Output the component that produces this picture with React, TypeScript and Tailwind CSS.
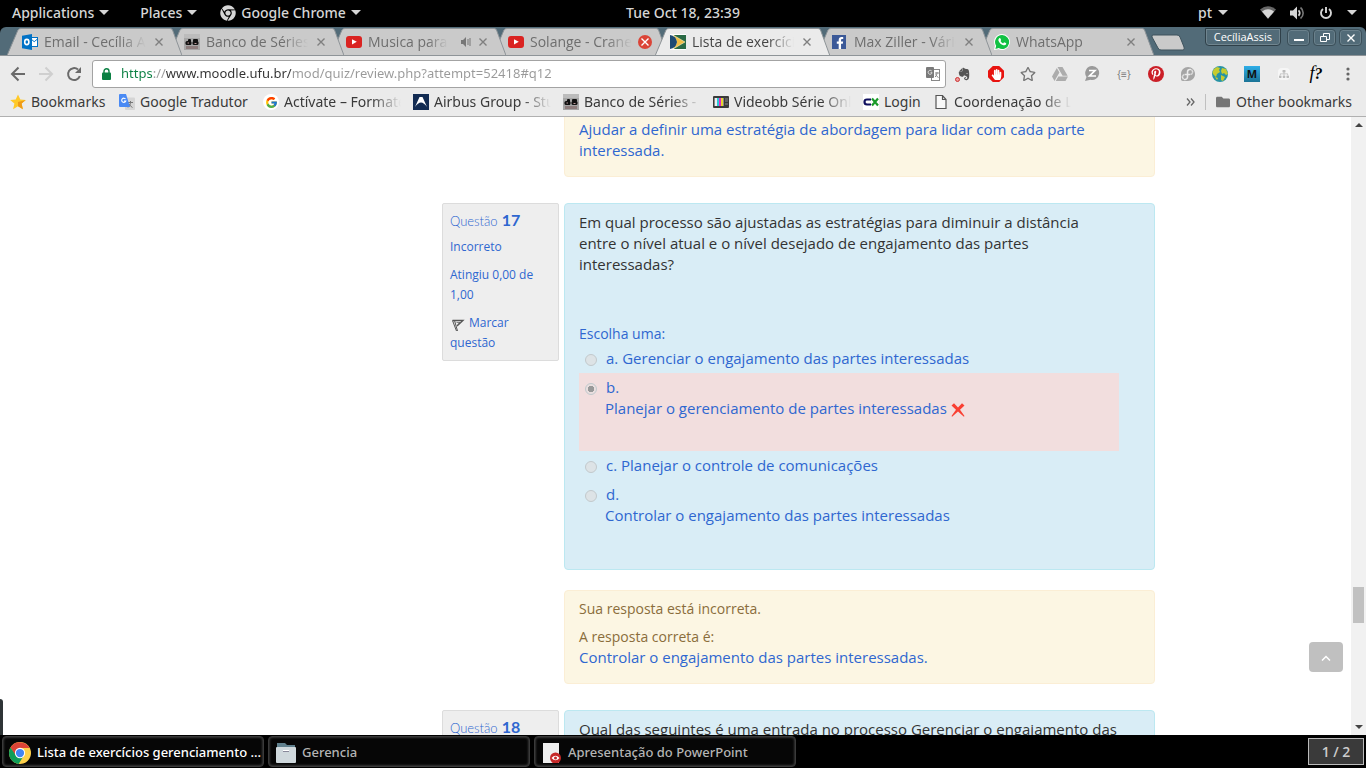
import type { ReactNode } from "react";
import {
  FaChrome,
  FaEvernote,
  FaFacebookF,
  FaFedora,
  FaFolder,
  FaGoogleDrive,
  FaHandPaper,
  FaPinterestP,
  FaRegStar,
  FaSitemap,
} from "react-icons/fa";
import { FcGoogle } from "react-icons/fc";

function Caret() {
  return (
    <svg viewBox="0 0 10 5" className="h-[5px] w-[10px]" fill="currentColor">
      <path d="M0 0h10L5 5z" />
    </svg>
  );
}

function TopBar() {
  return (
    <header className="grid h-[27px] shrink-0 grid-cols-[1fr_auto_1fr] items-center bg-black px-3 pb-[2px] font-['Noto_Sans',sans-serif] text-sm font-medium text-[#d6d6d6]">
      <nav className="flex items-center gap-[31px]">
        <button className="flex items-center gap-[5px]">
          Applications <Caret />
        </button>
        <button className="flex items-center gap-[5px]">
          Places <Caret />
        </button>
        <button className="-ml-2 flex items-center gap-[5px]">
          <FaChrome className="size-4" /> Google Chrome <Caret />
        </button>
      </nav>
      <time>Tue Oct 18, 23:39</time>
      <div className="flex items-center justify-end">
        <button className="mr-8 flex items-center gap-[6px]">
          pt <Caret />
        </button>
        <button aria-label="System" className="-mr-[3px] flex items-center gap-[14px]">
          <svg viewBox="0 0 16 13" className="h-[13px] w-4">
            <path d="M0 3.5Q8-3 16 3.5L8 13z" fill="#666" />
            <path d="M2 5.4Q8 1 14 5.4L8 12.6z" fill="#d6d6d6" />
          </svg>
          <svg viewBox="0 0 15 14" className="h-[14px] w-[15px]">
            <path d="M0 4.5h3L7 .5v13L3 9.5H0z" fill="#d6d6d6" />
            <path d="M8.5 4.3a3.6 3.6 0 0 1 0 5.4" fill="none" stroke="#d6d6d6" strokeWidth="1.8" />
            <path d="M10.5 1.5a7 7 0 0 1 0 11" fill="none" stroke="#777" strokeWidth="1.6" />
          </svg>
          <svg viewBox="0 0 14 14" className="size-[14px]" fill="none" stroke="#d6d6d6" strokeWidth="1.9">
            <path d="M4 3a5 5 0 1 0 6 0M7 1v6" />
          </svg>
          <Caret />
        </button>
      </div>
    </header>
  );
}

function YouTubeIcon() {
  return (
    <svg viewBox="0 0 16 16" className="size-4">
      <rect y="2" width="16" height="12" rx="3" fill="#da2321" />
      <path d="M6 5.2v5.2L10.8 7.8z" fill="#fff" />
    </svg>
  );
}

function SeriesIcon() {
  return (
    <svg viewBox="0 0 16 16" className="size-4">
      <rect width="16" height="16" fill="#a6a6a6" />
      <rect width="16" height="4" fill="#bcbcbc" />
      <g fill="#111">
        <rect x="1.500" y="7" width="6" height="4" rx="1.500" />
        <rect x="4" y="5" width="3" height="6" rx="1" />
        <rect x="9" y="5" width="5" height="3" rx="1" />
        <rect x="8.500" y="7" width="6" height="4" rx="1.500" />
      </g>
      <path d="M3.500 9h1.500M10.500 9.500h2" stroke="#b99" />
      <rect x="2" y="12" width="12" height="3" fill="#8d7c7c" />
    </svg>
  );
}

function OutlookIcon() {
  return (
    <svg viewBox="0 0 16 16" className="size-4">
      <rect x="8" y="3.500" width="7.500" height="9" fill="#fff" stroke="#0072c6" />
      <path d="M9 5l3.200 2.700L15.500 5" fill="none" stroke="#0072c6" />
      <path d="M0 1.800L10 0v16L0 14.200z" fill="#0072c6" />
      <ellipse cx="4.800" cy="8" rx="2.100" ry="2.600" fill="none" stroke="#fff" strokeWidth="1.600" />
    </svg>
  );
}

function MoodleSiteIcon() {
  return (
    <svg viewBox="0 0 16 16" className="size-4">
      <rect width="16" height="16" fill="#fff" />
      <path d="M4 1h12v14H4z" fill="#2a6a45" />
      <path d="M3 1l12 7-12 7q7-7 0-14z" fill="#f0be45" stroke="#fff3c4" strokeWidth=".6" />
      <path d="M0 1q6 1 7 7-1 6-7 7z" fill="#1d4a73" />
    </svg>
  );
}

function FacebookIcon() {
  return (
    <span className="flex size-[14px] items-end justify-end bg-[#3b5998]">
      <FaFacebookF className="size-3 text-white" />
    </span>
  );
}

function WhatsAppIcon() {
  return (
    <svg viewBox="0 0 16 16" className="size-4">
      <path d="M8 0a8 8 0 1 1-3.500 15.200L0 16l.9-4.400A8 8 0 0 1 8 0z" fill="#fff" />
      <path d="M8 1a7 7 0 1 1-3.300 13.100L1.400 15l.8-3.200A7 7 0 0 1 8 1z" fill="#12c143" />
      <path
        d="M5.200 4.200q.9-.6 1.400.5l.5 1.200q.1.400-.6 1.100.9 1.700 2.600 2.400l.8-.9q.3-.3.700-.1l1.300.7q.6.300.2 1.200-.9 1.400-2.700.9Q5.500 10 4.400 6.500q-.2-1.500.8-2.300z"
        fill="#fff"
      />
    </svg>
  );
}

function Cross({ className }: { className: string }) {
  return (
    <svg viewBox="0 0 8 8" className={className} fill="none" stroke="currentColor" strokeWidth="1.4">
      <path d="M.5.5l7 7M7.500.5l-7 7" />
    </svg>
  );
}

type TabData = { title: string; icon: ReactNode; active?: boolean; audio?: boolean; alert?: boolean };

const tabs: TabData[] = [
  { title: "Email - Cecília Assis", icon: <OutlookIcon /> },
  { title: "Banco de Séries", icon: <SeriesIcon /> },
  { title: "Musica para estudar", icon: <YouTubeIcon />, audio: true },
  { title: "Solange - Cranes", icon: <YouTubeIcon />, alert: true },
  { title: "Lista de exercícios", icon: <MoodleSiteIcon />, active: true },
  { title: "Max Ziller - Vários", icon: <FacebookIcon /> },
  { title: "WhatsApp", icon: <WhatsAppIcon /> },
];

const tabLayers = ["z-[7]", "z-[6]", "z-[5]", "z-[4]", "z-[9]", "z-[3]", "z-[2]"];

function Tab({ tab, layer }: { tab: TabData; layer: string }) {
  return (
    <div className={`relative flex h-7 w-[162px] shrink-0 items-center pl-[15px] ${layer}`}>
      <svg viewBox="0 0 175 28" className="absolute top-0 left-0 -z-10 h-7 w-[175px]">
        <path d="M0 28L11 2Q12 .5 14 .5H163Q165 .5 165.500 2L175 28z" fill={tab.active ? "#ebebeb" : "#cacaca"} />
        <path
          d={tab.active ? "M0 28L11 2Q12 .5 14 .5H163Q165 .5 165.500 2L175 28" : "M0 27.500L11 2Q12 .5 14 .5H163Q165 .5 165.500 2L175 27.500z"}
          fill="none"
          stroke="#8e9498"
        />
      </svg>
      <span className="flex w-[22px] shrink-0">{tab.icon}</span>
      <span
        className={`overflow-hidden pb-[1px] text-sm whitespace-nowrap mask-r-from-75% ${tab.audio ? "w-[80px]" : "w-[102px]"} ${tab.active ? "text-[#454545]" : "text-[#6e6e6e]"}`}
      >
        {tab.title}
      </span>
      {tab.audio && (
        <svg viewBox="0 0 10 10" className="ml-[13px] h-[10px] w-[10px]" fill="#777">
          <path d="M0 3h2l3-3v10L2 7H0z" />
          <path d="M7 2v6M9 1v8" stroke="#777" />
        </svg>
      )}
      {tab.alert ? (
        <button aria-label="Close tab" className="mr-[3px] ml-auto flex size-[14px] shrink-0 items-center justify-center rounded-full bg-[#db4437] text-white">
          <Cross className="size-2" />
        </button>
      ) : (
        <button aria-label="Close tab" className="mr-[6px] ml-auto text-[#7f7f7f]">
          <Cross className="size-2" />
        </button>
      )}
    </div>
  );
}

function TabStrip() {
  return (
    <div className="bg-black">
      <div className="relative z-0 flex h-[29px] items-start overflow-hidden rounded-t-md border-b border-[#8e9498] bg-[#526b78] pt-[1px] pl-[7px]">
        {tabs.map((tab, i) => (
          <Tab key={tab.title} tab={tab} layer={tabLayers[i]} />
        ))}
        <button aria-label="New tab" className="mt-[6px] ml-[10px]">
          <svg viewBox="0 0 34 17" className="h-[17px] w-[34px]">
            <path d="M2 1h24q2 0 3 2l4 10q1 3-1 3H10q-2 0-3-2L1 3q-.5-2 1-2z" fill="#cacaca" stroke="#3e525c" />
          </svg>
        </button>
        <div className="ml-auto flex items-start gap-[3px] pr-1">
          <button className="mr-[3px] h-[18px] rounded-b border border-[#2f4049] px-2 text-[11px] leading-4 text-white shadow-[inset_0_0_0_1px_#70858f]">
            CecíliaAssis
          </button>
          {["Minimize", "Restore", "Close"].map((name) => (
            <button
              key={name}
              aria-label={name}
              className="mt-[1px] flex h-[17px] w-[23px] items-center justify-center rounded-sm border border-[#3b4f59] text-white shadow-[inset_0_0_0_1px_#6b818c]"
            >
              {name === "Minimize" && <span className="mt-1 h-[2px] w-[10px] bg-white" />}
              {name === "Restore" && (
                <svg viewBox="0 0 10 10" className="size-[10px]" fill="none" stroke="currentColor">
                  <path d="M3.500 3V.5h6v6H7M.5 3.500h6v5h-6z" />
                </svg>
              )}
              {name === "Close" && <Cross className="size-2" />}
            </button>
          ))}
        </div>
      </div>
    </div>
  );
}

const extensions: { name: string; icon: ReactNode }[] = [
  {
    name: "Web Clipper",
    icon: (
      <span className="relative">
        <FaEvernote className="size-[14px] text-[#555]" />
        <span className="absolute -bottom-[1px] -left-[2px] size-[5px] rounded-full border border-[#c33] bg-[#e99]" />
      </span>
    ),
  },
  {
    name: "Ad blocker",
    icon: (
      <span className="flex size-4 items-center justify-center bg-[#e8130f] [clip-path:polygon(30%_0,70%_0,100%_30%,100%_70%,70%_100%,30%_100%,0_70%,0_30%)]">
        <FaHandPaper className="size-[11px] text-white" />
      </span>
    ),
  },
  { name: "Bookmark this page", icon: <FaRegStar className="size-4 text-[#757575]" /> },
  { name: "Drive", icon: <FaGoogleDrive className="size-4 text-[#acacac]" /> },
  {
    name: "Zotero",
    icon: (
      <svg viewBox="0 0 16 16" className="size-4">
        <path d="M8.500 0a7 7 0 1 1-2 13.800L1 15l1.500-4A7 7 0 0 1 8.500 0z" fill="#9a9a9a" />
        <path d="M5 4.500h6l-5.500 5.500H12" fill="none" stroke="#fff" strokeWidth="1.700" />
      </svg>
    ),
  },
  { name: "Code", icon: <span className="text-[10px] leading-none text-[#777]">{"{≡}"}</span> },
  {
    name: "Pinterest",
    icon: (
      <span className="flex size-4 items-center justify-center rounded-full bg-[#cb1f27]">
        <FaPinterestP className="size-3 text-white" />
      </span>
    ),
  },
  { name: "Fedora", icon: <FaFedora className="size-4 text-[#a5a5a5]" /> },
  {
    name: "Globe",
    icon: (
      <svg viewBox="0 0 16 16" className="size-4">
        <circle cx="8" cy="8" r="8" fill="#2793a5" />
        <path d="M2 3l3-2 3 1-1 2 1 2-3 2-1 3-3-3-.5-2zM10 2l4 1 2 5-2 1-2-2-2 1-1-3zM9 9l4 2-2 4-2-1zM3 11l3 1-1 2z" fill="#c6cb2e" />
      </svg>
    ),
  },
  {
    name: "M",
    icon: <span className="flex size-4 items-center justify-center bg-linear-to-b from-[#2eaee8] to-[#1b7396] text-[11px] font-bold text-[#111]">M</span>,
  },
  {
    name: "Sitemap",
    icon: (
      <span className="flex size-3 items-center justify-center rounded-sm bg-[#f6f6f6]">
        <FaSitemap className="size-[10px] text-[#bbb]" />
      </span>
    ),
  },
  {
    name: "Font finder",
    icon: (
      <span className="font-['Liberation_Serif',serif] text-lg leading-none text-black">
        <i>f</i>
        <b className="text-base italic">?</b>
      </span>
    ),
  },
  {
    name: "Menu",
    icon: (
      <svg viewBox="0 0 4 14" className="h-[14px] w-1" fill="#666">
        <circle cx="2" cy="2" r="1.600" />
        <circle cx="2" cy="7" r="1.600" />
        <circle cx="2" cy="12" r="1.600" />
      </svg>
    ),
  },
];

function Toolbar() {
  return (
    <div className="flex h-[33px] items-center bg-[#ebebeb] pt-[3px] pr-[2px] pl-[10px]">
      <div className="flex w-[82px] items-center gap-3">
        <button aria-label="Back">
          <svg viewBox="0 0 16 16" className="size-4" fill="none" stroke="#6a6a6a" strokeWidth="2">
            <path d="M15 8H2.500M8.500 1.500L2 8l6.500 6.500" />
          </svg>
        </button>
        <button aria-label="Forward">
          <svg viewBox="0 0 16 16" className="size-4" fill="none" stroke="#cfcfcf" strokeWidth="2">
            <path d="M1 8h12.500M7.500 1.500L14 8l-6.500 6.500" />
          </svg>
        </button>
        <button aria-label="Reload">
          <svg viewBox="0 0 16 16" className="size-4" fill="none" stroke="#6a6a6a" strokeWidth="2">
            <path d="M13.800 10A6 6 0 1 1 12 3.500" />
            <path d="M15 1v6H9z" fill="#6a6a6a" stroke="none" />
          </svg>
        </button>
      </div>
      <div className="flex h-7 flex-1 items-center rounded-[3px] border border-[#a3a3a3] bg-white px-[9px]">
        <svg viewBox="0 0 9 12" className="mr-[10px] h-3 w-[9px]">
          <path d="M2 6V3.300a2.500 2.500 0 0 1 5 0V6" fill="none" stroke="#0b8043" strokeWidth="1.400" />
          <rect y="4.500" width="9" height="7.500" rx="1" fill="#0b8043" />
        </svg>
        <input
          aria-label="Address"
          defaultValue="https://www.moodle.ufu.br/mod/quiz/review.php?attempt=52418#q12"
          className="flex-1 bg-[linear-gradient(90deg,#0b8043_31px,#999_31px,#999_45px,#333_45px,#333_171px,#999_171px)] bg-clip-text font-['Noto_Sans',sans-serif] text-[13px] text-transparent caret-black outline-none"
        />
        <button aria-label="Translate this page" className="-mr-1">
          <svg viewBox="0 0 14 14" className="size-[14px]">
            <rect x="5.500" y="2.500" width="8" height="11" fill="#fff" stroke="#888" />
            <rect width="8" height="11" rx="1" fill="#7a7a7a" />
            <path d="M5.800 4.200a2 2 0 1 0 .3 1.500H4.500" fill="none" stroke="#ddd" />
            <path d="M9 6h4M11 5v1q0 3-2 4M9.500 7.500q1 2 3 3" fill="none" stroke="#888" />
          </svg>
        </button>
      </div>
      <div className="ml-[2px] flex">
        {extensions.map((item) => (
          <button key={item.name} aria-label={item.name} className="flex h-7 w-8 items-center justify-center">
            {item.icon}
          </button>
        ))}
      </div>
    </div>
  );
}

const bookmarks: { title: string; width: string; fade?: boolean; icon: ReactNode }[] = [
  {
    title: "Bookmarks",
    width: "w-[109px]",
    icon: (
      <svg viewBox="0 0 16 16" className="size-4">
        <path d="M8 .5l2.300 5 5.500.5-4.200 3.600 1.300 5.600L8 12.300l-4.900 2.900 1.300-5.600L.2 6l5.500-.5z" fill="#ffc928" />
        <path d="M8 12.300V8l3.600 1.600 1.300 5.600zM8 8l7.800-2-4.200 3.600z" fill="#ef9b18" />
      </svg>
    ),
  },
  {
    title: "Google Tradutor",
    width: "w-[144px]",
    icon: (
      <svg viewBox="0 0 16 16" className="size-4">
        <rect x="6" y="3.500" width="10" height="12.500" rx="1" fill="#d5d5d5" />
        <path d="M9 8.500h5M11.500 7v1.500q0 3-2.500 5M10 10q1 2 3.500 3.500" fill="none" stroke="#777" />
        <path d="M1 0h6l4 13H1q-1 0-1-1V1q0-1 1-1z" fill="#4a8af4" />
        <path d="M6.500 5a2.100 2.100 0 1 0 .3 2H5" fill="none" stroke="#fff" strokeWidth="1.100" />
      </svg>
    ),
  },
  {
    title: "Actívate – Formate",
    width: "w-[150px]",
    fade: true,
    icon: (
      <span className="flex size-4 items-center justify-center rounded-full bg-white">
        <FcGoogle className="size-[13px]" />
      </span>
    ),
  },
  {
    title: "Airbus Group - Students",
    width: "w-[150px]",
    fade: true,
    icon: (
      <svg viewBox="0 0 16 16" className="size-4">
        <rect width="16" height="16" fill="#122b52" />
        <path d="M2 13L6.500 3h3L14 13q-3-4.500-6-4.500T2 13z" fill="#fff" />
      </svg>
    ),
  },
  { title: "Banco de Séries - Org", width: "w-[150px]", fade: true, icon: <SeriesIcon /> },
  {
    title: "Videobb Série Online",
    width: "w-[150px]",
    fade: true,
    icon: (
      <svg viewBox="0 0 16 16" className="size-4">
        <rect y="2" width="16" height="12" rx="1" fill="#3a3a3a" />
        <path d="M12 5h3M12 7h3M12 10h3" stroke="#888" />
        <rect x="1" y="4" width="10" height="8" fill="#888" />
        <rect x="2" y="4" width="2" height="8" fill="#eee" />
        <rect x="4" y="4" width="2" height="8" fill="#2cc8d8" />
        <rect x="6" y="4" width="2" height="8" fill="#e02cc8" />
        <rect x="8" y="4" width="2" height="8" fill="#e8d52c" />
      </svg>
    ),
  },
  {
    title: "Login",
    width: "w-[70px]",
    icon: (
      <svg viewBox="0 0 16 16" className="size-4" fill="none" strokeWidth="2.200">
        <rect width="16" height="16" fill="#fff" />
        <path d="M8 5.500H4Q1.500 5.500 1.500 8T4 10.500h4" stroke="#10105e" />
        <path d="M9 4.500l6 7M15 4.500l-6 7" stroke="#1a9a2a" />
      </svg>
    ),
  },
  {
    title: "Coordenação de Letras",
    width: "w-[150px]",
    fade: true,
    icon: (
      <svg viewBox="0 0 16 16" className="size-4" fill="#f8f8f8" stroke="#555" strokeWidth="1.200">
        <path d="M3 1.500h6.500l3.500 4v9H3zM9.500 1.500v4H13" />
      </svg>
    ),
  },
];

function BookmarksBar() {
  return (
    <div className="flex h-7 items-center border-b border-[#b0b0b0] bg-[#ebebeb] pr-[14px] pb-[1px] pl-[10px] font-['Noto_Sans',sans-serif] text-sm text-[#3a3a3a]">
      {bookmarks.map((b) => (
        <a key={b.title} href="#" className={`flex shrink-0 items-center gap-[5px] pr-3 ${b.width}`}>
          <span className="shrink-0">{b.icon}</span>
          <span className={b.fade ? "overflow-hidden whitespace-nowrap mask-r-from-75%" : "whitespace-nowrap"}>{b.title}</span>
        </a>
      ))}
      <button aria-label="More bookmarks" className="ml-auto">
        <svg viewBox="0 0 9 8" className="h-2 w-[9px]" fill="none" stroke="#666" strokeWidth="1.300">
          <path d="M1 .5L4 4 1 7.500M5 .5L8 4 5 7.500" />
        </svg>
      </button>
      <span className="mx-[10px] h-4 w-px bg-[#c0c0c0]" />
      <a href="#" className="flex items-center gap-[6px]">
        <FaFolder className="size-[14px] text-[#757575]" /> Other bookmarks
      </a>
    </div>
  );
}

function InfoBox({ number, children }: { number: number; children?: ReactNode }) {
  return (
    <aside className="w-[117px] shrink-0 self-start rounded-xs border border-[#dcdcdc] bg-[#eee] p-[7px] text-xs leading-5">
      <h3 className="flex h-5 items-baseline gap-1 font-['Lato',sans-serif] text-[13px] leading-[18px] font-light">
        Questão <span className="text-base leading-[18px] font-bold">{number}</span>
      </h3>
      {children}
    </aside>
  );
}

function Feedback({ children }: { children: ReactNode }) {
  return (
    <div className="rounded border border-[#fbeed5] bg-[#fcf6e3] pt-2 pr-[35px] pb-[15px] pl-[14px] text-sm leading-5 text-[#8a6d3b]">
      {children}
    </div>
  );
}

const questionBox = "rounded border border-[#bce8f1] bg-[#d9edf6] pt-2 pr-[35px] pl-[14px] text-[15px] leading-[21px]";

const answers = [
  { key: "a", text: "Gerenciar o engajamento das partes interessadas" },
  { key: "b", text: "Planejar o gerenciamento de partes interessadas", block: true, chosen: true },
  { key: "c", text: "Planejar o controle de comunicações" },
  { key: "d", text: "Controlar o engajamento das partes interessadas", block: true },
];

function Answers() {
  return (
    <fieldset className="mt-[49px]">
      <legend className="text-sm leading-5">Escolha uma:</legend>
      {answers.map((a) => (
        <div key={a.key} className={`flex items-start pt-1 pl-[6px] ${a.block ? "pb-8" : "pb-1"} ${a.chosen ? "bg-[#f2dede]" : ""}`}>
          <input
            type="radio"
            name="answer"
            id={`answer-${a.key}`}
            defaultChecked={a.chosen}
            disabled
            className="mt-[6px] mr-2 size-3 shrink-0 appearance-none rounded-full border border-[#c2c9cc] bg-[#dde3e6] checked:bg-[radial-gradient(circle,#999_3px,#eadfdf_3px)]"
          />
          <label htmlFor={`answer-${a.key}`}>
            <span className="pl-[1px]">{a.key}. </span>
            {a.block ? (
              <span className="block">
                {a.text}
                {a.chosen && <WrongMark />}
              </span>
            ) : (
              a.text
            )}
          </label>
        </div>
      ))}
    </fieldset>
  );
}

function WrongMark() {
  return (
    <svg viewBox="0 0 14 14" className="ml-1 inline size-[14px]" role="img" aria-label="Incorreto">
      <path d="M.5 2.500L3 .3l4 4.200L11 .3l2.500 2.200L9 6.800 13.500 13l-.6.800L7 8.600l-5.900 5.200-.6-.8L5 6.800z" fill="#f93f32" />
    </svg>
  );
}

function Page() {
  return (
    <div className="relative flex min-h-0 flex-1 bg-white text-[#2f67d0]">
      <main className="flex flex-1 flex-col gap-[26px] overflow-hidden pr-[196px] pl-[442px]">
        <div className="-mt-[29px] pl-[122px]">
          <Feedback>
            <p>A resposta correta é:</p>
            <p className="mt-[2px] text-[15px] leading-[21px] text-[#2f67d0]">
              Ajudar a definir uma estratégia de abordagem para lidar com cada parte interessada.
            </p>
          </Feedback>
        </div>
        <section className="flex gap-[5px]">
          <InfoBox number={17}>
            <p className="mt-[6px]">Incorreto</p>
            <p className="mt-2">Atingiu 0,00 de 1,00</p>
            <p className="mt-2">
              <a href="#">
                <svg viewBox="0 0 16 16" className="mr-[3px] inline size-4" fill="none" stroke="#555">
                  <path d="M2.500 4.500L6.500 15M4.500 4.500L7.500 15" />
                  <path d="M2.500 4.500H13L7 10" strokeWidth="1.300" />
                  <path d="M6.500 6.500H10L7.500 8.500" strokeWidth=".7" />
                </svg>
                Marcar questão
              </a>
            </p>
          </InfoBox>
          <div className="flex min-w-0 flex-1 flex-col gap-5">
            <div className={`${questionBox} pb-[11px]`}>
              <p className="text-[#333]">
                Em qual processo são ajustadas as estratégias para diminuir a distância entre o nível atual e o nível desejado de
                engajamento das partes interessadas?
              </p>
              <Answers />
            </div>
            <Feedback>
              <p className="mb-2">Sua resposta está incorreta.</p>
              <p>A resposta correta é:</p>
              <p className="text-[15px] leading-[21px] text-[#2f67d0]">Controlar o engajamento das partes interessadas.</p>
            </Feedback>
          </div>
        </section>
        <section className="flex gap-[5px]">
          <InfoBox number={18} />
          <div className={`${questionBox} min-w-0 flex-1 pb-2`}>
            <p className="text-[#333]">Qual das seguintes é uma entrada no processo Gerenciar o engajamento das</p>
          </div>
        </section>
      </main>
      <button aria-label="Back to top" className="absolute right-[23px] bottom-[63px] flex h-[30px] w-[34px] items-center justify-center rounded bg-[#c0c0c0]">
        <svg viewBox="0 0 10 6" className="mt-[2px] h-[6px] w-[10px]" fill="none" stroke="#fff" strokeWidth="1.500">
          <path d="M1 5.500l4-4 4 4" />
        </svg>
      </button>
      <div className="flex w-[15px] shrink-0 flex-col items-center bg-[#f1f1f1] py-[6px] text-[#444]">
        <svg viewBox="0 0 8 4" className="h-1 w-2 fill-current">
          <path d="M0 4h8L4 0z" />
        </svg>
        <span className="mt-auto mb-[102px] h-9 w-[11px] bg-[#c1c1c1]" />
        <svg viewBox="0 0 8 4" className="h-1 w-2 fill-current">
          <path d="M0 0h8L4 4z" />
        </svg>
      </div>
      <span className="absolute bottom-0 left-0 h-9 w-[3px] rounded-tr bg-[#2e3436]" />
    </div>
  );
}

const windows = [
  {
    title: "Lista de exercícios gerenciamento ...",
    active: true,
    icon: (
      <svg viewBox="0 0 24 24" className="size-[22px] shrink-0">
        <circle cx="12" cy="12" r="12" fill="#fdd04a" />
        <path d="M1.600 6A12 12 0 0 1 22.400 6.500H12L7 15z" fill="#db4437" />
        <path d="M1.600 6A12 12 0 0 0 10.500 23.900L16 15 7 14z" fill="#0f9d58" />
        <circle cx="12" cy="12" r="5.600" fill="#fff" />
        <circle cx="12" cy="12" r="4.500" fill="#4285f4" />
      </svg>
    ),
  },
  {
    title: "Gerencia",
    icon: (
      <svg viewBox="0 0 20 20" className="ml-[1px] size-5 shrink-0">
        <path d="M1 0h8l2 2h8v6H1z" fill="#5f7f8c" />
        <rect y="4" width="20" height="16" rx="1" fill="#cfd8dc" />
        <path d="M7 7.500h6" stroke="#fff" />
        <path d="M7 8.500h6" stroke="#889" />
      </svg>
    ),
  },
  {
    title: "Apresentação do PowerPoint",
    icon: (
      <svg viewBox="0 0 20 20" className="ml-[1px] size-5 shrink-0">
        <rect x="1" width="16" height="20" fill="#eee" />
        <circle cx="13.500" cy="15" r="5.500" fill="#c62828" />
        <path d="M9.500 15q4-4.500 8 0-4 4.500-8 0z" fill="#fff" />
        <circle cx="13.500" cy="15" r="1.500" fill="#c62828" />
      </svg>
    ),
  },
];

function Taskbar() {
  return (
    <footer className="flex h-[33px] shrink-0 items-center gap-1 bg-black pr-[2px] pl-[2px]">
      {windows.map((w) => (
        <button
          key={w.title}
          className={`flex h-[31px] w-[262px] items-center gap-[6px] rounded border border-[#3a3a3a] bg-[#060606] px-[6px] pt-[2px] font-['Noto_Sans',sans-serif] text-[13px] font-medium whitespace-nowrap shadow-[inset_0_0_3px_#666] ${w.active ? "text-white" : "text-[#b4b4b4]"}`}
        >
          {w.icon}
          {w.title}
        </button>
      ))}
      <button className="ml-auto h-[27px] w-14 border border-[#bbb] bg-[#3a3a3a] text-sm font-semibold text-[#ccc]">1 / 2</button>
    </footer>
  );
}

export default function App() {
  return (
    <div className="flex h-screen flex-col overflow-hidden font-['Open_Sans',sans-serif]">
      <TopBar />
      <TabStrip />
      <Toolbar />
      <BookmarksBar />
      <Page />
      <Taskbar />
    </div>
  );
}
